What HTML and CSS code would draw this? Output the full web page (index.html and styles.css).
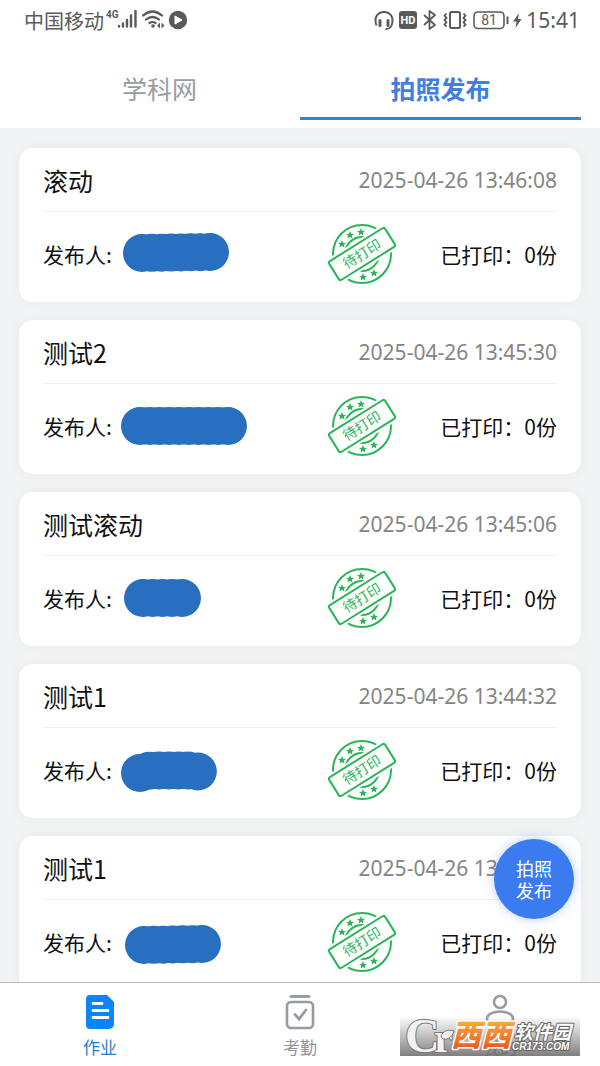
FILE: index.html
```html
<!DOCTYPE html>
<html lang="zh-CN">
<head>
  <meta charset="UTF-8" />
  <title>拍照发布</title>
  <meta name="viewport" content="width=device-width, initial-scale=1.0" />
  <link rel="stylesheet" href="styles.css">
</head>
<body>
  <!-- shared stamp artwork -->
  <svg class="defs" width="0" height="0" aria-hidden="true">
    <defs>
      <path id="star" d="M0-4 1.100-1.300 4-1.100 1.800.7 2.500 3.500 0 2-2.500 3.500-1.800.7-4-1.100-1.100-1.300z" />
      <g id="stamp">
        <circle cx="35" cy="31" r="29" fill="none" stroke="#2bb459" stroke-width="2" />
        <circle cx="35" cy="31" r="17" fill="none" stroke="#2bb459" stroke-width="2" />
        <g transform="rotate(-32 35 31)">
          <rect x="0" y="17" width="70" height="28" fill="#fff" />
          <rect x="2" y="20" width="66" height="22" rx="2" fill="#fff" stroke="#2bb459" stroke-width="2" />
        </g>
        <g fill="#2bb459">
          <use href="#star" x="15" y="21" />
          <use href="#star" x="23" y="12" />
          <use href="#star" x="34" y="9" />
          <use href="#star" x="36" y="54" />
          <use href="#star" x="47" y="50" />
        </g>
      </g>
    </defs>
  </svg>

  <div class="status-bar">
    <div class="status-left">
      <span>中国移动</span>
      <svg width="84" height="24" viewBox="0 0 84 24" fill="none" stroke="#5a5a5a">
        <text class="net-type" x="2" y="10">4G</text>
        <g stroke-width="2.4" stroke-linecap="round">
          <path d="M15 18v.5M19 15.500v3M23 12v6.500M27 7.500v11M31.500 3v15.500" />
        </g>
        <g stroke-width="2.200" stroke-linecap="round">
          <path d="M39 7.500q9.500-8 19 0M42 11.500q6.500-5 13 0M45.500 15q3-2 6 0" />
        </g>
        <circle cx="49" cy="18" r="1.800" fill="#5a5a5a" stroke="none" />
        <path d="M56 14.500v6l-3-3zM57.500 14.500v6l3-3z" fill="#5a5a5a" stroke="none" />
        <circle cx="74" cy="12" r="9.200" fill="#5a5a5a" stroke="none" />
        <path d="M71 8v8l7-4z" fill="#fff" stroke="#fff" stroke-linejoin="round" />
      </svg>
    </div>
    <div class="status-right">
      <svg width="152" height="24" viewBox="0 0 152 24" fill="none" stroke="#5a5a5a">
        <g stroke-width="2">
          <path d="M2.500 17.500C-.5 9 4 4 10 4s10.500 5 7.500 13.500c-1 2.500-2.500 3.500-6 3.500" />
          <path d="M6 12.500v5M14 12.500v5" stroke-width="3" stroke-linecap="round" />
        </g>
        <rect x="25" y="3" width="18" height="18" rx="3" fill="#5a5a5a" stroke="none" />
        <text class="hd" x="34" y="16">HD</text>
        <path d="M50 7l11 10-5.500 4V3L61 7 50 17" stroke-width="1.800" stroke-linejoin="round" />
        <rect x="76" y="4" width="10" height="16" rx="1.500" stroke-width="2" />
        <path d="M72.500 5.500l-2 2.200 2 2.200-2 2.200 2 2.200-2 2.200 2 2.200M89.500 5.500l2 2.200-2 2.200 2 2.200-2 2.200 2 2.200-2 2.200" stroke-width="1.800" />
        <rect x="100" y="4" width="30" height="16.500" rx="4" stroke-width="1.600" />
        <text class="battery" x="115" y="17">81</text>
        <path d="M133.500 8.500v7.500" stroke-width="2" />
        <path d="M145 5l-6 8.500h3.500L141.500 20l6-9H144z" fill="#5a5a5a" stroke="none" />
      </svg>
      <span>15:41</span>
    </div>
  </div>

  <nav class="tabs">
    <a class="tab" href="#xkw">学科网</a>
    <a class="tab active" href="#photo">拍照发布</a>
  </nav>

  <main class="list">
    <article class="card">
      <div class="card-head">
        <h2>滚动</h2>
        <time>2025-04-26 13:46:08</time>
      </div>
      <div class="card-body">
        <span class="label">发布人:</span>
        <svg class="mask" viewBox="0 0 136 44"><path d="M23 21 91 20" stroke-dasharray="0 9.710" /></svg>
        <svg class="stamp" viewBox="0 0 70 62"><use href="#stamp" /><text x="35" y="36" transform="rotate(-32 35 31)">待打印</text></svg>
        <span class="count">已打印：0份</span>
      </div>
    </article>

    <article class="card">
      <div class="card-head">
        <h2>测试2</h2>
        <time>2025-04-26 13:45:30</time>
      </div>
      <div class="card-body">
        <span class="label">发布人:</span>
        <svg class="mask" viewBox="0 0 136 44"><path d="M21 22H109" stroke-dasharray="0 9.770" /></svg>
        <svg class="stamp" viewBox="0 0 70 62"><use href="#stamp" /><text x="35" y="36" transform="rotate(-32 35 31)">待打印</text></svg>
        <span class="count">已打印：0份</span>
      </div>
    </article>

    <article class="card">
      <div class="card-head">
        <h2>测试滚动</h2>
        <time>2025-04-26 13:45:06</time>
      </div>
      <div class="card-body">
        <span class="label">发布人:</span>
        <svg class="mask" viewBox="0 0 136 44"><path d="M24 22H63" stroke-dasharray="0 9.740" /></svg>
        <svg class="stamp" viewBox="0 0 70 62"><use href="#stamp" /><text x="35" y="36" transform="rotate(-32 35 31)">待打印</text></svg>
        <span class="count">已打印：0份</span>
      </div>
    </article>

    <article class="card">
      <div class="card-head">
        <h2>测试1</h2>
        <time>2025-04-26 13:44:32</time>
      </div>
      <div class="card-body">
        <span class="label">发布人:</span>
        <svg class="mask" viewBox="0 0 136 44"><path d="M21 25 31 22.500H69L79 23.500" stroke-dasharray="0 9.700" /></svg>
        <svg class="stamp" viewBox="0 0 70 62"><use href="#stamp" /><text x="35" y="36" transform="rotate(-32 35 31)">待打印</text></svg>
        <span class="count">已打印：0份</span>
      </div>
    </article>

    <article class="card">
      <div class="card-head">
        <h2>测试1</h2>
        <time>2025-04-26 13:44:08</time>
      </div>
      <div class="card-body">
        <span class="label">发布人:</span>
        <svg class="mask" viewBox="0 0 136 44"><path d="M25 25 83 24" stroke-dasharray="0 9.660" /></svg>
        <svg class="stamp" viewBox="0 0 70 62"><use href="#stamp" /><text x="35" y="36" transform="rotate(-32 35 31)">待打印</text></svg>
        <span class="count">已打印：0份</span>
      </div>
    </article>
  </main>

  <footer class="bottom">
    <button class="fab" type="button">拍照<br>发布</button>

    <nav class="tabbar">
      <a class="active" href="#homework">
        <svg width="30" height="36" viewBox="0 0 30 36">
          <path d="M5 1h17l7 7v22a5 5 0 0 1-5 5H5a4 4 0 0 1-4-4V5a4 4 0 0 1 4-4z" fill="#0d84ff" />
          <path d="M8 9.500h9M8 16.500h15M8 23.500h15" stroke="#fff" stroke-width="2.800" stroke-linecap="round" />
        </svg>
        <span>作业</span>
      </a>
      <a href="#attendance">
        <svg width="30" height="36" viewBox="0 0 30 36" fill="none" stroke="#969ba5">
          <path d="M6 2.500h18" stroke-width="2.800" stroke-linecap="round" />
          <rect x="2" y="8" width="26" height="26" rx="4" stroke-width="2.600" />
          <path d="M10 20.500l4 4.500 7-9" stroke-width="2.800" stroke-linecap="round" />
        </svg>
        <span>考勤</span>
      </a>
      <a href="#mine">
        <svg width="30" height="36" viewBox="0 0 30 36" fill="none" stroke="#969ba5" stroke-width="2.600">
          <circle cx="15" cy="8" r="6" />
          <path d="M2 25c0-10 26-10 26 0 0 7-26 7-26 0z" />
        </svg>
        <span>我的</span>
      </a>
    </nav>

    <svg class="watermark" width="180" height="58" viewBox="0 -10 180 58">
      <defs>
        <linearGradient id="shade" x1="0" y1="0" x2="0" y2="1">
          <stop offset="0" stop-color="#707070" stop-opacity=".05" />
          <stop offset="1" stop-color="#686868" stop-opacity=".85" />
        </linearGradient>
        <linearGradient id="orange" x1="0" y1="0" x2="0" y2="1">
          <stop offset="0.200" stop-color="#fbb03c" />
          <stop offset="0.900" stop-color="#e8541c" />
        </linearGradient>
      </defs>
      <rect width="180" height="38" fill="url(#shade)" />
      <text class="wm-c" x="5" y="34">C</text>
      <text class="wm-r" x="34" y="34">r</text>
      <path d="M41 18c2-5 7-7 13-5-2 7-8 10-12 7z" fill="#f2f2f2" stroke="#777" />
      <text class="wm-xi" x="51" y="28">西西</text>
      <text class="wm-name" x="114" y="21">软件园</text>
      <text class="wm-site" x="112" y="32">CR173.COM</text>
    </svg>
  </footer>
</body>
</html>
```

FILE: styles.css
```css
* {
  box-sizing: border-box;
}

body {
  margin: 0;
  height: 100vh;
  display: flex;
  flex-direction: column;
  background: #fff;
  color: #111;
  font-family: "Noto Sans CJK SC", sans-serif;
}

a {
  color: inherit;
  text-decoration: none;
}

svg {
  display: block;
  flex-shrink: 0;
}

.defs {
  position: absolute;
}

/* status bar */
.status-bar {
  flex-shrink: 0;
  height: 40px;
  padding: 0 20px 0 24px;
  display: flex;
  justify-content: space-between;
  align-items: center;
  font-size: 20px;
  color: #5a5a5a;
}

.status-left,
.status-right {
  display: flex;
  align-items: center;
}

.net-type {
  font: bold 10px Roboto, sans-serif;
  fill: #5a5a5a;
  stroke: none;
}

.hd {
  font: bold 11px Roboto, sans-serif;
  fill: #fff;
  stroke: none;
  text-anchor: middle;
}

.battery {
  font: 14px Roboto, sans-serif;
  fill: #5a5a5a;
  stroke: none;
  text-anchor: middle;
}

.status-right span {
  font-family: "Noto Sans", sans-serif;
  font-size: 21px;
}

/* top tabs */
.tabs {
  flex-shrink: 0;
  height: 88px;
  padding: 0 19px;
  display: flex;
}

.tab {
  flex: 1;
  height: 80px;
  line-height: 96px;
  text-align: center;
  font-size: 25px;
  color: #999da2;
  border-bottom: 3px solid transparent;
}

.tab.active {
  color: #3f7fe0;
  font-weight: bold;
  border-color: #3f7fd6;
}

/* cards */
.list {
  flex: 1;
  min-height: 0;
  overflow: hidden;
  padding: 20px 19px;
  background: #f2f3f5;
}

.card {
  padding: 0 24px 6px;
  margin-bottom: 18px;
  background: #fff;
  border-radius: 14px;
  box-shadow: 0 0 16px rgba(0, 0, 0, 0.04);
}

.card-head {
  height: 64px;
  display: flex;
  justify-content: space-between;
  align-items: center;
  border-bottom: 1px solid #f0f0f1;
}

.card-head h2 {
  margin: 0;
  font-size: 25px;
  font-weight: normal;
}

.card-head time {
  font-family: "Noto Sans", sans-serif;
  font-size: 21px;
  color: #858585;
}

.card-body {
  height: 84px;
  display: flex;
  align-items: center;
  font-size: 21px;
}

.label {
  width: 76px;
  white-space: nowrap;
}

.mask {
  width: 136px;
  height: 44px;
  fill: none;
  stroke: #286fc0;
  stroke-width: 38;
  stroke-linecap: round;
}

.stamp {
  width: 70px;
  height: 62px;
  margin-left: auto;
  margin-right: 43px;
}

.stamp text {
  font-size: 14px;
  fill: #2bb459;
  text-anchor: middle;
}

.count {
  white-space: nowrap;
}

/* bottom bar */
.bottom {
  position: relative;
  flex-shrink: 0;
  border-top: 1px solid #b9bbbf;
  background: #fff;
}

.fab {
  position: absolute;
  right: 26px;
  bottom: 147px;
  width: 80px;
  height: 80px;
  padding: 0;
  border: none;
  border-radius: 50%;
  background: #3a7cf0;
  color: #fff;
  font-family: inherit;
  font-size: 18px;
  line-height: 22px;
  box-shadow: 0 0 12px rgba(58, 124, 240, 0.35);
  cursor: pointer;
}

.tabbar {
  height: 83px;
  padding-top: 11px;
  display: flex;
}

.tabbar a {
  flex: 1;
  display: flex;
  flex-direction: column;
  align-items: center;
  gap: 6px;
  font-size: 17px;
  line-height: 22px;
  color: #909499;
}

.tabbar a.active {
  color: #1b7fd8;
}

/* site watermark */
.watermark {
  position: absolute;
  right: 20px;
  bottom: 0;
}

.watermark text {
  paint-order: stroke;
  stroke-linejoin: round;
}

.wm-c,
.wm-r {
  font-family: "Liberation Serif", serif;
  fill: #f2f2f2;
  stroke: #777;
  stroke-width: 2px;
}

.wm-c {
  font-size: 48px;
  font-weight: bold;
}

.wm-r {
  font-size: 42px;
  font-weight: bold;
}

.wm-xi {
  font-size: 30px;
  font-weight: 900;
  font-style: italic;
  fill: url(#orange);
  stroke: #fff;
  stroke-width: 3px;
}

.wm-name {
  font-size: 19px;
  font-weight: bold;
  font-style: italic;
  fill: #fff;
  stroke: #666;
  stroke-width: 2px;
}

.wm-site {
  font: italic bold 10px "Liberation Sans", sans-serif;
  fill: #fff;
  stroke: #666;
  stroke-width: 2px;
}
```
